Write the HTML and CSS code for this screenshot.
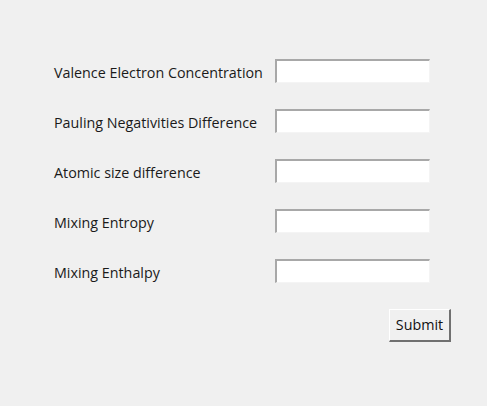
FILE: index.html
```html
<!DOCTYPE html>
<html>
<head>
<meta charset="utf-8">
<link rel="stylesheet" href="styles.css">
</head>
<body>
<div class="form">
  <div class="row"><span class="label">Valence Electron Concentration</span><span class="entry"></span></div>
  <div class="row"><span class="label">Pauling Negativities Difference</span><span class="entry"></span></div>
  <div class="row"><span class="label">Atomic size difference</span><span class="entry"></span></div>
  <div class="row"><span class="label">Mixing Entropy</span><span class="entry"></span></div>
  <div class="row"><span class="label">Mixing Enthalpy</span><span class="entry"></span></div>
  <div class="actions"><span class="button">Submit</span></div>
</div>
</body>
</html>
```
FILE: styles.css
```css
html, body {
  margin: 0;
  padding: 0;
  background: #f0f0f0;
  width: 487px;
  height: 406px;
  overflow: hidden;
}
.form {
  padding-top: 59px;
  padding-left: 54px;
  font-family: "Open Sans", "Noto Sans", sans-serif;
  font-size: 14.3px;
  color: #1a1a1a;
}
.row {
  display: grid;
  grid-template-columns: 221px 155px;
  grid-template-rows: 24px;
  align-items: start;
  height: 24px;
  margin-bottom: 26px;
}
.label {
  line-height: 28px;
  height: 24px;
  white-space: nowrap;
}
.entry {
  display: block;
  height: 24px;
  box-sizing: border-box;
  background: #fff;
  border-top: 2px solid #a8a8a8;
  border-left: 2px solid #a8a8a8;
  border-right: 1px solid #f4f4f4;
  border-bottom: 1px solid #f4f4f4;
}
.actions {
  display: flex;
  justify-content: flex-end;
  width: 397px;
}
.button {
  display: block;
  box-sizing: border-box;
  width: 62px;
  height: 33px;
  line-height: 30px;
  text-align: center;
  background: #f0f0f0;
  border-top: 1px solid #fff;
  border-left: 1px solid #fff;
  border-right: 2px solid #707070;
  border-bottom: 2px solid #707070;
  color: #111;
}
```
